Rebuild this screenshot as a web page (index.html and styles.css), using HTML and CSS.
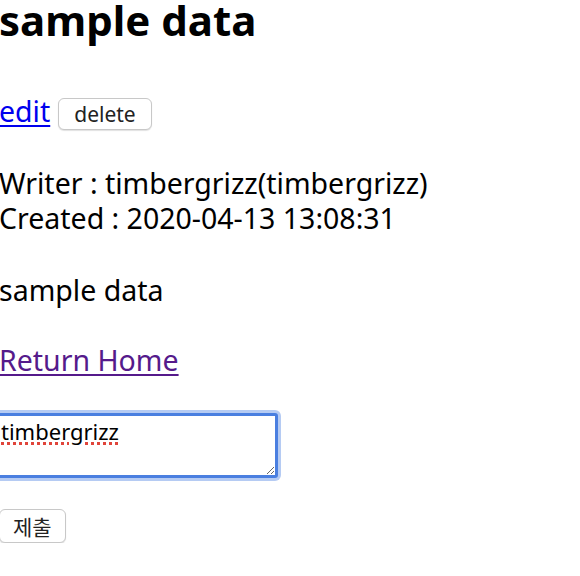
FILE: index.html
```html
<!DOCTYPE html>
<html lang="ko">
<head>
<meta charset="utf-8">
<title>sample data</title>
<link rel="stylesheet" href="styles.css">
</head>
<body>
<div class="page">
  <h1 class="title">sample data</h1>
  <div class="actions">
    <a class="link" href="#">edit</a>
    <button class="btn btn-delete" type="button">delete</button>
  </div>
  <p class="meta">Writer : timbergrizz(timbergrizz)<br>Created : 2020-04-13 13:08:31</p>
  <p class="body-text">sample data</p>
  <p class="home"><a class="link visited" href="#">Return Home</a></p>
  <form class="comment">
    <textarea class="comment-input">timbergrizz</textarea>
    <button class="btn btn-submit" type="button">제출</button>
  </form>
</div>
</body>
</html>
```

FILE: styles.css
```css
html, body {
  margin: 0;
  padding: 0;
  background: #fff;
}
body {
  font-family: "Noto Sans", "Noto Sans CJK KR", sans-serif;
  font-size: 28.5px;
  line-height: 35px;
  color: #000;
}
.page {
  margin-left: -1px;
}
.title {
  margin: 0;
  font-size: 42px;
  line-height: 40px;
  font-weight: 700;
}
.actions {
  margin-top: 54px;
  display: flex;
  align-items: baseline;
  gap: 8px;
}
.link {
  color: #0000ee;
  text-decoration: underline;
  text-underline-offset: 3px;
  text-decoration-thickness: 2px;
}
.link.visited {
  color: #551a8b;
}
.btn {
  font-family: "Noto Sans", "Noto Sans CJK KR", sans-serif;
  font-size: 21px;
  line-height: 24px;
  color: #222;
  background: #fff;
  border: 1px solid #c8c8c8;
  border-radius: 6px;
  box-shadow: 0 1px 1px rgba(0,0,0,0.12);
  padding: 3px 14px;
}
.btn-delete {
  height: 32px;
  padding: 0 15px;
}
.meta {
  margin: 36px 0 0;
}
.body-text {
  margin: 37px 0 0;
}
.home {
  margin: 35px 0 0;
}
.comment {
  margin: 35px 0 0;
  display: flex;
  flex-direction: column;
  align-items: flex-start;
}
.comment-input {
  margin-left: -6px;
  width: 269px;
  height: 57px;
  box-sizing: content-box;
  padding: 1px 5px;
  font-family: "Noto Sans", "Noto Sans CJK KR", sans-serif;
  font-size: 22px;
  line-height: 28px;
  color: #000;
  border: 3px solid #4a7fe0;
  border-radius: 3px;
  box-shadow: 0 0 0 3px #b5cbf3;
  outline: none;
  resize: both;
  text-decoration: underline dotted #e0443a;
  text-decoration-thickness: 3px;
}
.btn-submit {
  margin-top: 31px;
  height: 34px;
  padding: 0 13px;
  font-family: "Noto Sans CJK KR", sans-serif;
}
```
